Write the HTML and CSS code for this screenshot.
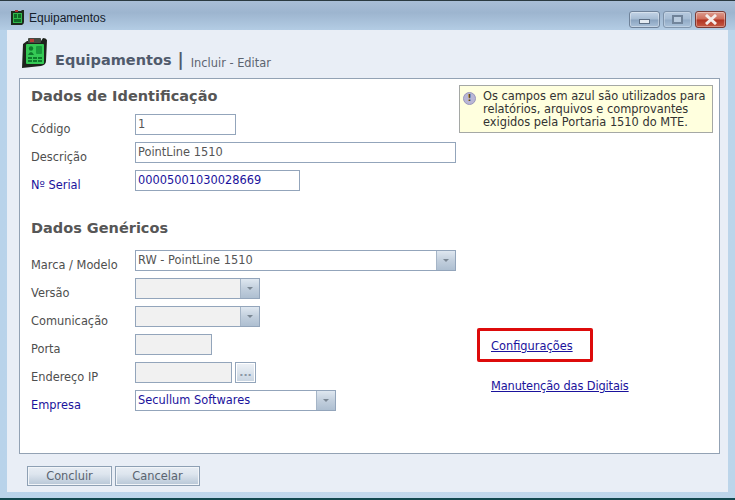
FILE: index.html
```html
<!DOCTYPE html>
<html lang="pt">
<head>
<meta charset="utf-8">
<title>Equipamentos</title>
<link rel="stylesheet" href="styles.css">
</head>
<body>
<div class="window">
  <div class="titlebar">
    <svg class="title-icon" width="15" height="17" viewBox="0 0 15 17"><path d="M1 2 L1 16 L12 16 Q14 15 14 13 L14 1 L12 1 L11 2 Z" fill="#1c2a1c"/><rect x="3" y="4" width="9" height="10" fill="#2fb84a"/><rect x="5" y="1" width="3" height="2" fill="#a33"/><rect x="4" y="5" width="3" height="4" fill="#0f6a25"/><rect x="8" y="5" width="3" height="4" fill="#0f6a25"/><rect x="4" y="10" width="7" height="3" fill="#0f6a25"/></svg>
    <span class="title-text">Equipamentos</span>
    <div class="controls">
      <div class="ctl ctl-min"><span class="min-glyph"></span></div>
      <div class="ctl ctl-max"><span class="max-glyph"></span></div>
      <div class="ctl ctl-close"><svg width="16" height="11" viewBox="0 0 16 11"><path d="M3 1 L13 10 M13 1 L3 10" stroke="#f4ecea" stroke-width="3"/></svg></div>
    </div>
  </div>
  <div class="client">
    <header class="page-head">
      <svg class="head-icon" width="25" height="30" viewBox="0 0 25 30">
        <path d="M1 6 L0 30 L19 28 Q24 27 24 23 L25 2 Q24 0 21 0 L19 3 L5 3 Z" fill="#1d221c"/>
        <rect x="6" y="0" width="13" height="5" rx="1" fill="#454a42"/>
        <rect x="8" y="1" width="4" height="3" fill="#b73a35"/>
        <rect x="4" y="6" width="18" height="20" rx="1" fill="#35c955"/>
        <circle cx="9" cy="10.5" r="2.2" fill="#0e7a2c"/><path d="M6 17 Q9 11 12 17 Z" fill="#0e7a2c"/>
        <rect x="14" y="8" width="6" height="8" rx="1" fill="#1a9a3c"/>
        <g fill="#0e7a2c"><rect x="6" y="19" width="4" height="2"/><rect x="11" y="19" width="4" height="2"/><rect x="16" y="19" width="4" height="2"/><rect x="6" y="22" width="4" height="2"/><rect x="11" y="22" width="4" height="2"/><rect x="16" y="22" width="4" height="2"/></g>
      </svg>
      <h1 class="head-title">Equipamentos</h1>
      <span class="head-sep">|</span>
      <span class="head-sub">Incluir - Editar</span>
    </header>
    <main class="panel">
      <div class="form-col">
        <h2 class="section first">Dados de Identificação</h2>
        <div class="row"><label class="lbl">Código</label><div class="field w-code">1</div></div>
        <div class="row"><label class="lbl">Descrição</label><div class="field w-full">PointLine 1510</div></div>
        <div class="row"><label class="lbl blue">Nº Serial</label><div class="field w-serial blue">00005001030028669</div></div>
        <h2 class="section second">Dados Genéricos</h2>
        <div class="row"><label class="lbl">Marca / Modelo</label><div class="field w-full combo"><span class="combo-text">RW - PointLine 1510</span><span class="arrow"></span></div></div>
        <div class="row"><label class="lbl">Versão</label><div class="field w-small combo off"><span class="combo-text"></span><span class="arrow"></span></div></div>
        <div class="row"><label class="lbl">Comunicação</label><div class="field w-small combo off"><span class="combo-text"></span><span class="arrow"></span></div></div>
        <div class="row"><label class="lbl">Porta</label><div class="field w-porta off"></div></div>
        <div class="row"><label class="lbl">Endereço IP</label><div class="field w-ip off"></div><div class="dots">...</div></div>
        <div class="row"><label class="lbl blue">Empresa</label><div class="field w-emp combo blue"><span class="combo-text">Secullum Softwares</span><span class="arrow"></span></div></div>
      </div>
      <aside class="side-col">
        <div class="note">
          <span class="note-icon">!</span>
          <p class="note-text">Os campos em azul são utilizados para relatórios, arquivos e comprovantes exigidos pela Portaria 1510 do MTE.</p>
        </div>
        <div class="links">
          <div class="highlight"><a class="link" href="#">Configurações</a></div>
          <a class="link link-second" href="#">Manutenção das Digitais</a>
        </div>
      </aside>
    </main>
    <footer class="actions">
      <button class="btn b1" type="button">Concluir</button>
      <button class="btn b2" type="button">Cancelar</button>
    </footer>
  </div>
</div>
</body>
</html>
```
FILE: styles.css
```css
* { box-sizing: border-box; }
html, body { margin: 0; padding: 0; }
body { width: 735px; height: 500px; overflow: hidden; font-family: "DejaVu Sans", Verdana, sans-serif; font-size: 11.4px; color: #4e4e4e; }
.window { width: 735px; height: 500px; display: flex; flex-direction: column; padding: 0 7px 6px 7px; border-top: 1px solid #2b3a40; border-bottom: 2px solid #12484f; background: linear-gradient(90deg, #b9d3ea 0, #c3d8ec 50%, #bcd5ea 100%); }
.titlebar { height: 29px; flex: none; margin: 0 -7px; padding: 5px 7px 0 10px; display: flex; align-items: center; background: linear-gradient(180deg, #a9bed6 0, #9db5cf 40%, #b3cce4 100%); }
.title-icon { margin-right: 4px; margin-top: -1px; }
.title-text { font-family: "Liberation Sans", Arial, sans-serif; font-size: 12px; color: #15202b; flex: 1; }
.controls { display: flex; gap: 3px; margin-top: 2px; }
.ctl { height: 17px; border: 1px solid #6f8299; border-radius: 3px; display: flex; align-items: center; justify-content: center; background: linear-gradient(180deg, #c3d4e6 0, #a6bcd3 48%, #8aa3bf 52%, #a9c0d8 100%); box-shadow: inset 0 0 0 1px rgba(255,255,255,.35); }
.ctl-min { width: 31px; }
.ctl-max { width: 29px; opacity: .7; }
.ctl-close { width: 31px; border-color: #7a3a35; background: linear-gradient(180deg, #dc9c8f 0, #cf6b58 48%, #b03322 52%, #c65a44 100%); margin-right: 2px; }
.min-glyph { width: 11px; height: 5px; margin-top: 4px; background: #e4ebf2; border: 1px solid #5d6f85; }
.max-glyph { width: 11px; height: 9px; border: 2px solid #5a6b80; background: #c3d2e2; }
.client { width: 721px; height: 462px; flex: none; background: #e9eef6; display: flex; flex-direction: column; padding: 0 8px 0 12px; }
.page-head { height: 48px; flex: none; padding: 0 0 0 3px; display: flex; align-items: flex-end; }
.head-icon { margin-bottom: 10px; margin-right: 8px; }
.head-title { margin: 0 0 10px; font-size: 14.5px; font-weight: bold; color: #505a6c; line-height: 16px; }
.head-sep { font-size: 17px; font-weight: bold; color: #505a6c; line-height: 18px; margin: 0 7px 9px 6px; }
.head-sub { font-size: 11.4px; line-height: 12px; color: #5c6470; margin-bottom: 9px; }
.panel { width: 701px; height: 376px; flex: none; background: #fff; border: 1px solid #93a2b4; display: flex; }
.form-col { width: 440px; padding-left: 11px; }
.section { margin: 0; font-size: 14.5px; font-weight: bold; line-height: 18px; color: #565656; }
.section.first { padding-top: 8px; height: 35px; }
.section.second { margin-top: 21px; height: 31px; }
.row { height: 28px; display: flex; }
.lbl { width: 104px; padding-top: 8px; line-height: 14px; }
.blue { color: #1a129c; }
.lbl.blue { color: #1a129c; }
.field { height: 21px; border: 1px solid #93a5bb; background: #fff; padding: 0 2px; line-height: 19px; font-size: 11.4px; color: #555; }
.field.blue { color: #1a129c; }
.off { background: #f1f1f1; }
.w-code { width: 101px; }
.w-full { width: 321px; }
.w-serial { width: 165px; }
.w-small { width: 125px; }
.w-porta { width: 77px; }
.w-ip { width: 97px; }
.w-emp { width: 201px; }
.combo { display: flex; padding: 0 0 0 2px; }
.combo-text { flex: 1; }
.arrow { width: 19px; border-left: 1px solid #a5b5c7; background: linear-gradient(180deg, #dfe7f0 0, #c2cfdd 50%, #aebfd1 100%); position: relative; }
.arrow::after { content: ""; position: absolute; left: 6px; top: 8px; border: 3px solid transparent; border-top: 3px solid #7b8794; border-bottom: 0; }
.dots { width: 21px; height: 21px; margin-left: 3px; border: 1px solid #93a5bb; background: linear-gradient(180deg, #eef2f7 0, #c8d4e1 100%); box-shadow: inset 0 0 0 1px #fff; font-size: 11px; font-weight: bold; line-height: 19px; text-align: center; color: #8a96a6; }
.side-col { flex: 1; padding: 6px 6px 0 0; }
.note { width: 254px; height: 48px; background: #ffffde; border: 1px solid #a5a8a5; display: flex; padding: 4px 0 0 3px; }
.note-icon { width: 13px; height: 13px; margin: 2px 7px 0 0; flex: none; border-radius: 50%; background: #b9b6d6; border: 1px solid #9a97bb; color: #5a4a10; font-size: 9px; font-weight: bold; line-height: 11px; text-align: center; }
.note-text { margin: 0; font-size: 11.4px; line-height: 13px; color: #333; }
.links { margin-top: 195px; margin-left: 18px; display: flex; flex-direction: column; align-items: flex-start; }
.highlight { width: 116px; height: 34px; border: 3px solid #dd0b0b; border-radius: 2px; padding: 8px 0 0 11px; line-height: 14px; }
.link { color: #1a129c; text-decoration: underline; font-size: 11.4px; line-height: 14px; }
.link-second { margin: 17px 0 0 14px; letter-spacing: -0.12px; }
.actions { padding: 12px 0 0 8px; display: flex; gap: 3px; }
.btn { height: 20px; padding: 0; border: 1px solid #8ea0b4; font: 11.4px/16px "DejaVu Sans", Verdana, sans-serif; color: #5a6470; background: linear-gradient(180deg, #e8edf4 0, #dde5ee 40%, #b7c6d6 100%); box-shadow: inset 0 0 0 1px #f2f5f9; }
.b1 { width: 85px; }
.b2 { width: 85px; }
```
